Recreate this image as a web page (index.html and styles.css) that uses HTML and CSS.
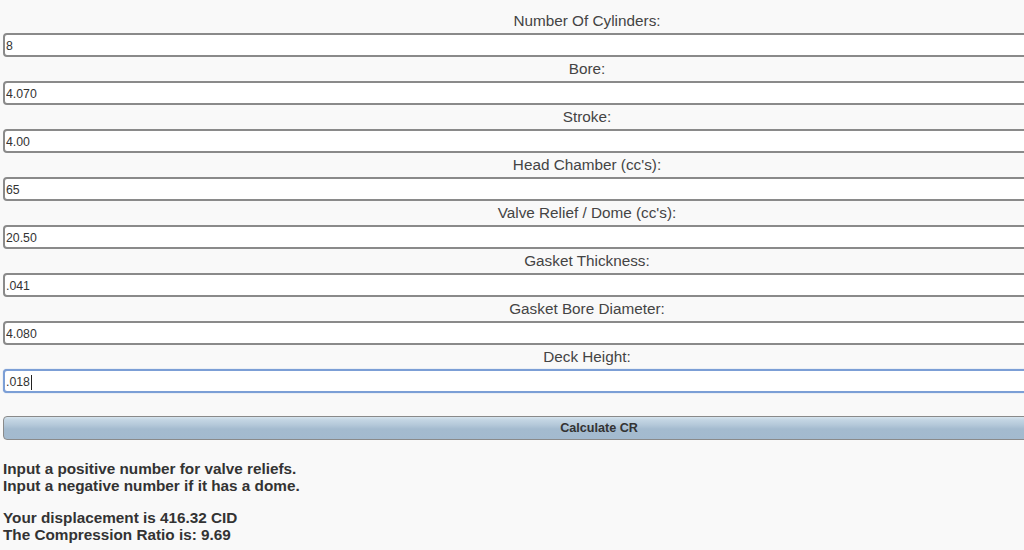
FILE: index.html
```html
<!DOCTYPE html>
<html>
<head>
<meta charset="utf-8">
<link rel="stylesheet" href="styles.css">
</head>
<body>
<div class="page">
  <form class="cr-form">
    <label class="field-label">Number Of Cylinders:</label>
    <input class="field" type="text" value="8">
    <label class="field-label">Bore:</label>
    <input class="field" type="text" value="4.070">
    <label class="field-label">Stroke:</label>
    <input class="field" type="text" value="4.00">
    <label class="field-label">Head Chamber (cc's):</label>
    <input class="field" type="text" value="65">
    <label class="field-label">Valve Relief / Dome (cc's):</label>
    <input class="field" type="text" value="20.50">
    <label class="field-label">Gasket Thickness:</label>
    <input class="field" type="text" value=".041">
    <label class="field-label">Gasket Bore Diameter:</label>
    <input class="field" type="text" value="4.080">
    <label class="field-label">Deck Height:</label>
    <div class="field field-focus"><span class="val">.018</span><span class="caret"></span></div>
    <button class="calc-btn" type="button">Calculate CR</button>
  </form>
  <div class="results">
    <p class="note">Input a positive number for valve reliefs.<br>Input a negative number if it has a dome.</p>
    <p class="note">Your displacement is 416.32 CID<br>The Compression Ratio is: 9.69</p>
  </div>
</div>
</body>
</html>
```

FILE: styles.css
```css
html, body {
  margin: 0;
  padding: 0;
  overflow: hidden;
  background: #f9f9f9;
}
body {
  font-family: "Liberation Sans", Arial, sans-serif;
  width: 1024px;
  height: 550px;
}
.page {
  width: 1200px;
  padding: 9px 0 0 3px;
}
.cr-form {
  display: flex;
  flex-direction: column;
  width: 1168px;
}
.field-label {
  display: block;
  text-align: center;
  font-size: 15.3px;
  line-height: 24px;
  height: 24px;
  color: #444;
}
.field {
  box-sizing: border-box;
  width: 1168px;
  height: 24px;
  margin: 0;
  border: 2px solid #8a8a8a;
  border-radius: 4px;
  background: #fff;
  padding: 2px 1px 0 1px;
  font-family: "Liberation Sans", Arial, sans-serif;
  font-size: 12.3px;
  color: #333;
  outline: none;
  display: flex;
  align-items: center;
}
.field-focus {
  border-color: #7c9fd6;
  box-shadow: 0 0 1px #7c9fd6;
}
.caret {
  display: inline-block;
  width: 1px;
  height: 15px;
  background: #222;
  margin-left: 1px;
}
.calc-btn {
  box-sizing: border-box;
  width: 1192px;
  height: 24px;
  margin-top: 23px;
  border: 1px solid #8a8a8a;
  border-radius: 4px;
  background: linear-gradient(#d6e4ee 0px, #c3d5e3 3px, #b4c8d9 8px, #a4bbcf 12px, #a3bacf 100%);
  font-family: "Liberation Sans", Arial, sans-serif;
  font-size: 12.6px;
  font-weight: bold;
  color: #333;
  padding: 0;
}
.results {
  margin-top: 21px;
}
.note {
  margin: 0 0 16px 0;
  font-size: 15.3px;
  line-height: 16.5px;
  font-weight: bold;
  color: #333;
}
```
